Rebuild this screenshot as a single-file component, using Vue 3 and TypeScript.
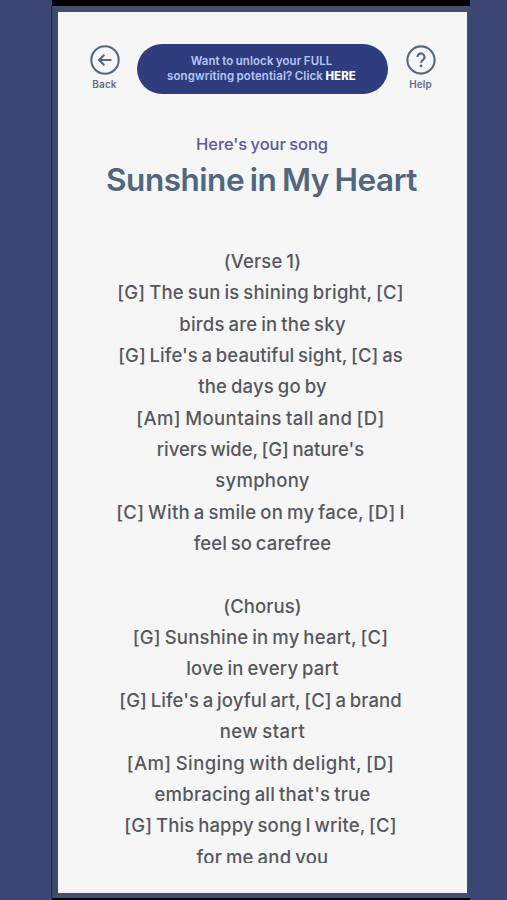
<script setup lang="ts">
interface Line {
  text: string
  tracking: number
}

const title = 'Sunshine in My Heart'

const verses: Line[][] = [
  [
    { text: '(Verse 1)', tracking: 0.174 },
    { text: '[G] The sun is shining bright, [C]', tracking: 0.21 },
    { text: 'birds are in the sky', tracking: 0.22 },
    { text: "[G] Life's a beautiful sight, [C] as", tracking: 0.065 },
    { text: 'the days go by', tracking: 0.19 },
    { text: '[Am] Mountains tall and [D]', tracking: 0.427 },
    { text: "rivers wide, [G] nature's", tracking: -0.042 },
    { text: 'symphony', tracking: 0.28 },
    { text: '[C] With a smile on my face, [D] I', tracking: 0.27 },
    { text: 'feel so carefree', tracking: 0.1 },
  ],
  [
    { text: '(Chorus)', tracking: 0.092 },
    { text: '[G] Sunshine in my heart, [C]', tracking: 0.216 },
    { text: 'love in every part', tracking: 0.196 },
    { text: "[G] Life's a joyful art, [C] a brand", tracking: 0.083 },
    { text: 'new start', tracking: 0.467 },
    { text: '[Am] Singing with delight, [D]', tracking: 0.431 },
    { text: "embracing all that's true", tracking: 0.225 },
    { text: '[G] This happy song I write, [C]', tracking: 0.15 },
    { text: 'for me and you', tracking: 0.234 },
  ],
]

const hasChords = (line: Line): boolean => line.text.includes('[')
</script>

<template>
  <div class="stage">
    <div class="device">
      <main class="screen">
        <header class="top">
          <button class="action" type="button">
            <svg viewBox="0 0 30 30" width="30" height="30" fill="none" stroke="currentColor">
              <circle cx="15" cy="15" r="13.7" stroke-width="2.1" />
              <path d="M21.5 15H9.5M14.3 9.8 9.1 15l5.2 5.2" stroke-width="2.2" />
            </svg>
            <span class="label">Back</span>
          </button>
          <a class="promo">
            <span class="row">Want to unlock your FULL</span>
            <span class="row">songwriting potential? Click <strong>HERE</strong></span>
          </a>
          <button class="action" type="button">
            <svg viewBox="0 0 30 30" width="30" height="30" fill="none" stroke="currentColor">
              <circle cx="15" cy="15" r="13.6" stroke-width="2.1" />
              <path d="M11.5 12a3.5 3.5 0 1 1 5.6 2.8c-1.4 1-2.1 1.5-2.1 3" stroke-width="2.2" />
              <circle cx="15" cy="20.9" r="1.4" fill="currentColor" stroke="none" />
            </svg>
            <span class="label">Help</span>
          </button>
        </header>
        <p class="intro">Here's your song</p>
        <h1 class="title">{{ title }}</h1>
        <section class="lyrics">
          <div v-for="(verse, v) in verses" :key="v" class="verse">
            <p
              v-for="line in verse"
              :key="line.text"
              class="line"
              :class="{ chorded: hasChords(line) }"
              :style="{ letterSpacing: line.tracking + 'px' }"
            >
              {{ line.text }}
            </p>
          </div>
        </section>
      </main>
    </div>
  </div>
</template>

<style>
body {
  margin: 0;
  background: #3b4675;
}
</style>

<style scoped>
.stage {
  box-sizing: border-box;
  width: 507px;
  height: 900px;
  padding-left: 52px;
  background: #3b4675;
  font-family: Inter, sans-serif;
  overflow: hidden;
}

.device {
  box-sizing: border-box;
  width: 418px;
  height: 900px;
  padding: 6px 0 2px;
  background: #000;
}

.screen {
  box-sizing: border-box;
  width: 418px;
  height: 892px;
  border: solid #424f6f;
  border-width: 6px 3px 5px 6px;
  border-left-color: #3c4a68;
  border-right-color: #3d4a72;
  background: #f6f6f6;
  box-shadow: -1px 0 0 #1c2748, 1px 0 0 #3b4675;
}

.top {
  display: flex;
  align-items: flex-start;
  justify-content: space-between;
  padding: 32px 31px 0 31px;
}

.action {
  display: flex;
  flex-direction: column;
  align-items: center;
  width: 31px;
  padding: 1px 0 0;
  border: 0;
  background: none;
  color: #536a80;
  font: inherit;
}

.action svg {
  display: block;
}

.label {
  margin-top: 3px;
  font-size: 10px;
  font-weight: 600;
  line-height: 13px;
  letter-spacing: 0.1px;
  color: #65688a;
}

.promo {
  box-sizing: border-box;
  display: flex;
  flex-direction: column;
  align-items: center;
  width: 251px;
  height: 50px;
  padding: 10px 2px 0 0;
  border-radius: 25px;
  background: #2f3d7f;
  color: #b9c7f4;
  font-size: 11.4px;
  font-weight: 600;
  line-height: 15px;
  white-space: nowrap;
}

.row {
  letter-spacing: 0.14px;
  word-spacing: -0.6px;
}

.promo strong {
  color: #fff;
  font-weight: 800;
}

.intro {
  margin: 39px 1px 0 0;
  font-size: 16.5px;
  font-weight: 500;
  line-height: 22px;
  letter-spacing: -0.08px;
  word-spacing: -0.8px;
  text-align: center;
  color: #5a5a9c;
}

.title {
  margin: 5px 2px 0 0;
  font-size: 31.5px;
  font-weight: 600;
  line-height: 40px;
  letter-spacing: -0.47px;
  word-spacing: -1.8px;
  text-align: center;
  color: #50677f;
}

.lyrics {
  display: flex;
  flex-direction: column;
  gap: 31.35px;
  height: 616.5px;
  margin-top: 46px;
  overflow: hidden;
}

.verse {
  flex-shrink: 0;
}

.line {
  margin: 0;
  font-size: 18.5px;
  font-weight: 500;
  line-height: 31.35px;
  word-spacing: -1.3px;
  text-align: center;
  white-space: nowrap;
  color: #56585f;
}

.chorded {
  padding-right: 4px;
}
</style>
